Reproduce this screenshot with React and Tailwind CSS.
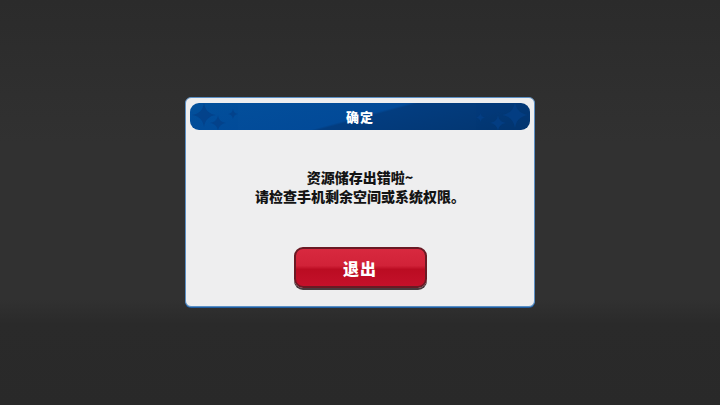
import React from "react";

function Sparkle({ size, className }) {
  return (
    <svg width={size} height={size} viewBox="0 0 20 20" className={className}>
      <path d="M10 0 C11 6 14 9 20 10 C14 11 11 14 10 20 C9 14 6 11 0 10 C6 9 9 6 10 0 Z" fill="currentColor" />
    </svg>
  );
}

function Header() {
  return (
    <div className="mx-[4px] mt-[5px] h-[27px] rounded-[9px] overflow-hidden bg-[linear-gradient(165deg,#03509c_0%,#024a98_50%,#033d80_52%,#03356f_100%)] grid grid-cols-[1fr_auto_1fr] items-center">
      <div className="flex items-start h-full pl-[2px] text-[#04428a] opacity-90">
        <Sparkle size={24} />
        <Sparkle size={16} className="-ml-[6px] mt-[12px]" />
        <Sparkle size={10} className="ml-[2px] mt-[6px]" />
      </div>
      <span className="text-white text-[13px] font-black tracking-[1px]">确定</span>
      <div className="flex items-start justify-end h-full pr-[2px] text-[#043f84] opacity-90">
        <Sparkle size={9} className="mt-[10px]" />
        <Sparkle size={16} className="ml-[5px] mt-[12px]" />
        <Sparkle size={26} className="-ml-[4px] -mt-[1px]" />
      </div>
    </div>
  );
}

export default function App() {
  return (
    <div className="w-[720px] h-[405px] bg-[linear-gradient(180deg,#2b2b2b_0%,#313131_35%,#313131_74%,#2a2a2a_80%,#292929_100%)] flex items-start justify-center pt-[97px] font-['Noto_Sans_CJK_SC',sans-serif]">
      <div className="w-[350px] h-[210px] rounded-[6px] bg-[#eeeeef] border border-[#5b8fc4] shadow-[0_1px_0_#1f5c9e] flex flex-col">
        <Header />
        <div className="flex flex-col items-center pt-[38px] text-[#141414] text-[14px] leading-[19px] font-black">
          <p>资源储存出错啦~</p>
          <p>请检查手机剩余空间或系统权限。</p>
        </div>
        <div className="flex justify-center mt-[41px]">
          <button className="w-[133px] h-[41px] rounded-[9px] border-2 border-[#6a1a24] bg-[linear-gradient(180deg,#d8293f_0%,#d12238_45%,#bb0c22_55%,#c4112a_100%)] shadow-[0_2px_0_#4a3a3e] text-white text-[16px] font-black tracking-[1px] flex items-center justify-center">
            退出
          </button>
        </div>
      </div>
    </div>
  );
}
